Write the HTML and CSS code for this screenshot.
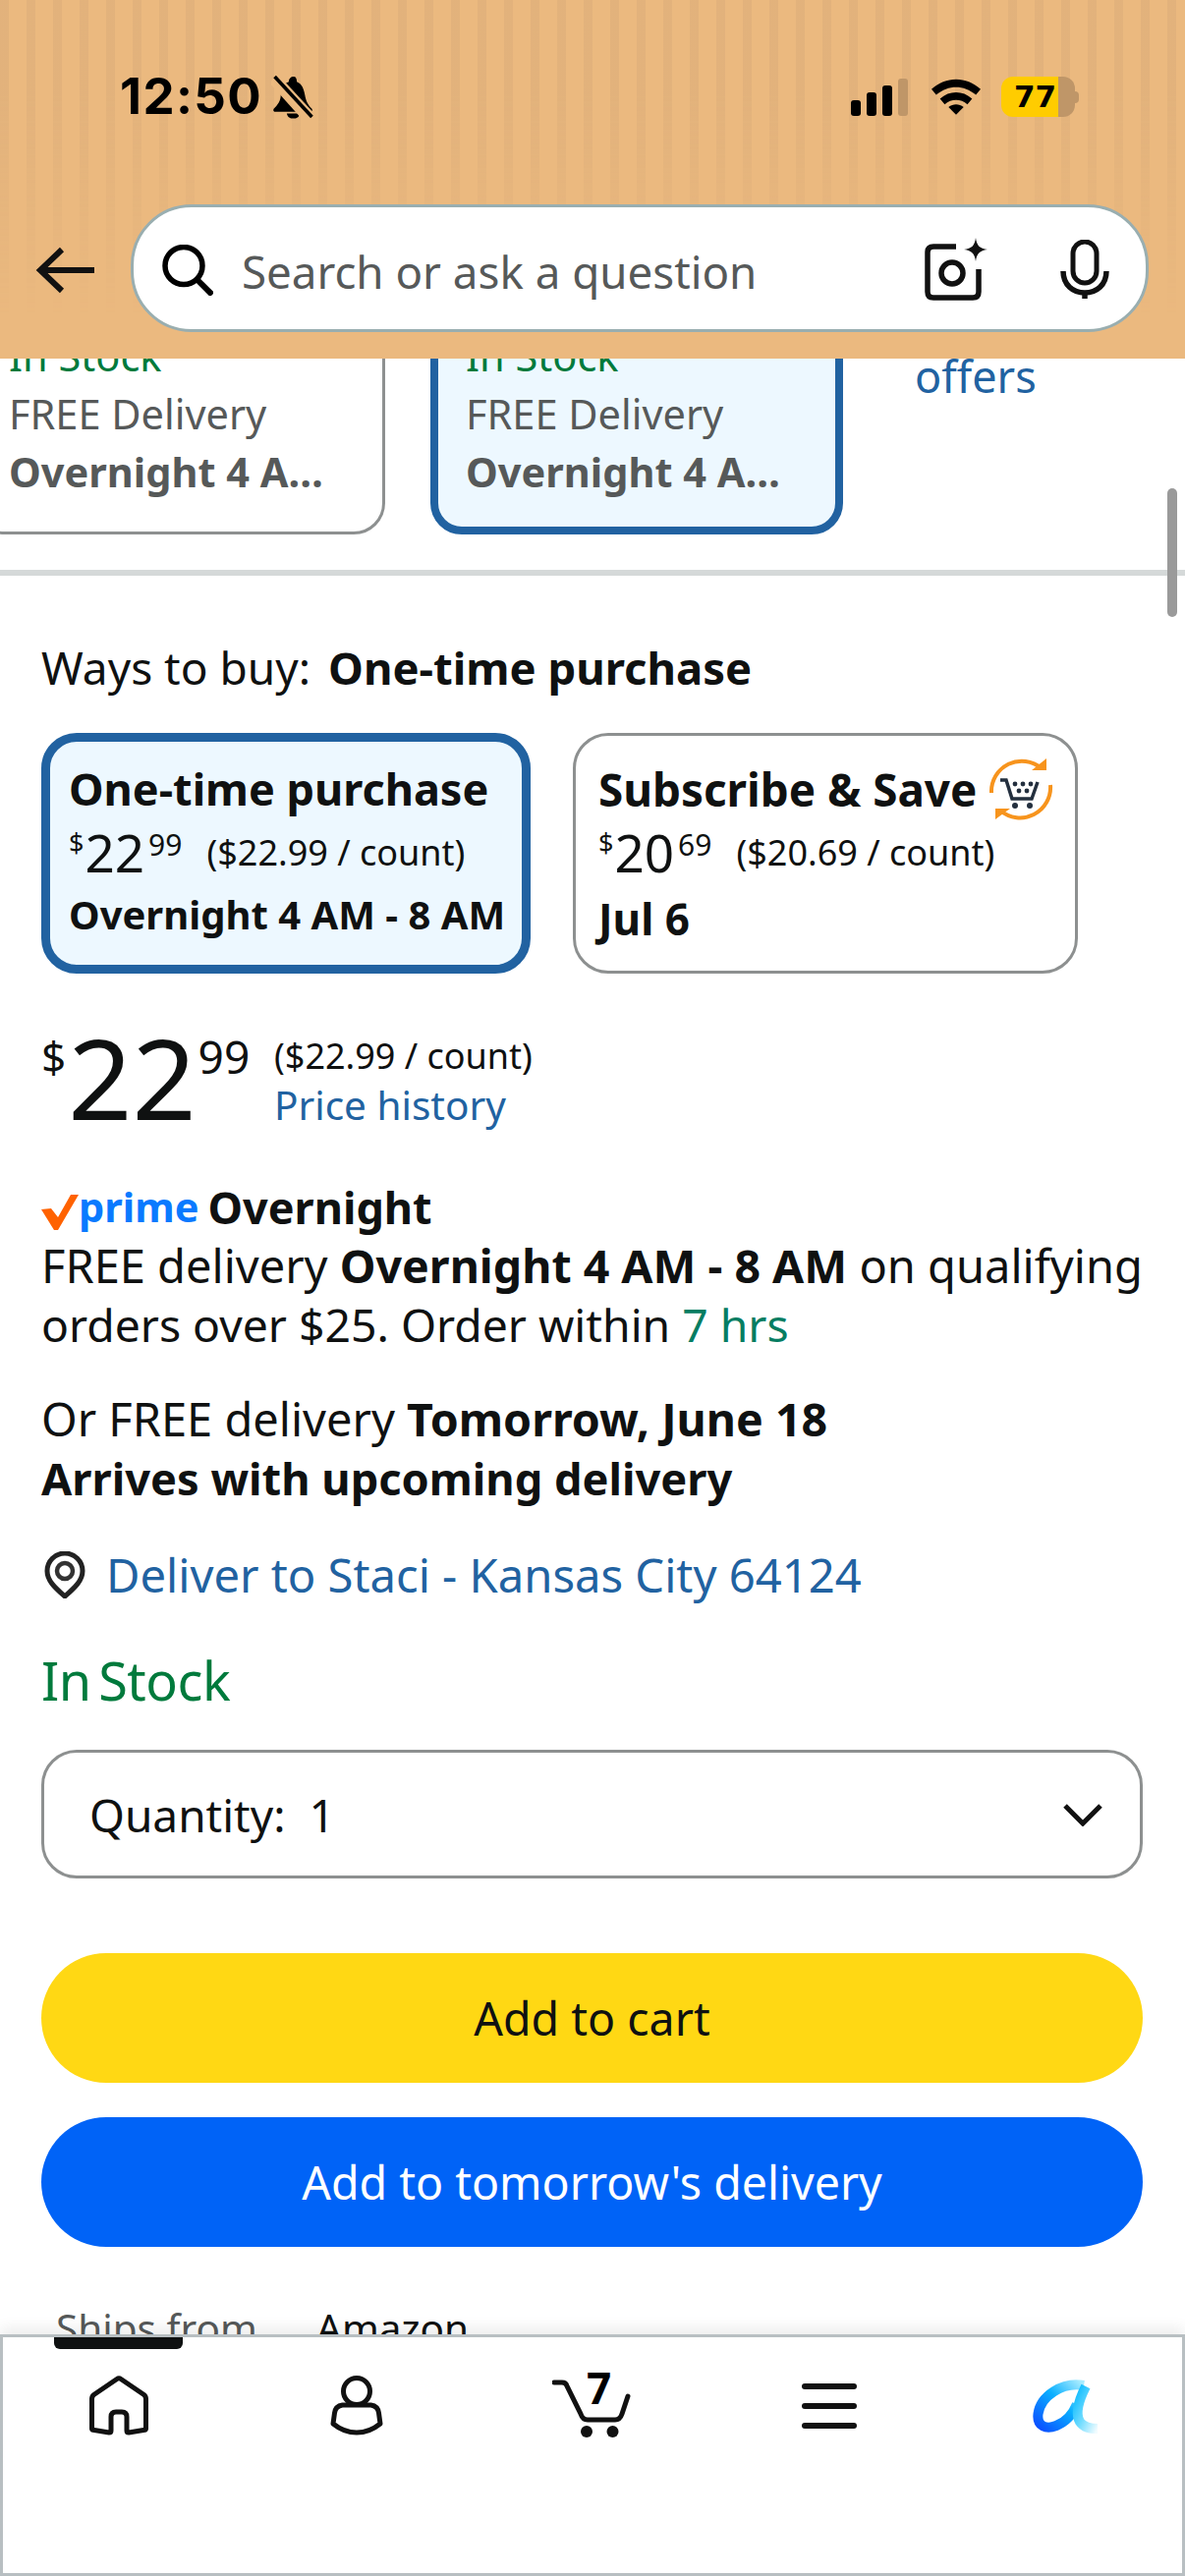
FILE: index.html
```html
<!DOCTYPE html>
<html lang="en">
<head>
<meta charset="utf-8">
<title>Amazon product</title>
<link rel="stylesheet" href="styles.css">
</head>
<body>
<div class="app">
  <header class="header">
    <div class="status">
      <div class="status-left">
        <span class="time">12:50</span>
        <svg class="bell" viewBox="0 0 42 44"><path d="M22 2c-3 0-5 2-5 5-6 2-8 7-8 13 0 6-3 10-7 14-1 2 0 3 2 3h34c2 0 3-1 2-3-4-4-6-8-7-14-1-6-3-11-8-13 0-3-1-5-3-5z" fill="#000"/><path d="M15 38.500h13c-1 4-3 5-6.500 5s-5.500-1-6.500-5z" fill="#000"/><path d="M0 6l34 38" stroke="#ebb97f" stroke-width="6"/><path d="M3 2l37 40" stroke="#ebb97f" stroke-width="8"/><path d="M3 2l37 40" stroke="#000" stroke-width="3.500"/></svg>
      </div>
      <div class="status-right">
        <svg class="signal" viewBox="0 0 58 38"><rect x="0" y="22" width="10" height="16" rx="3" fill="#000"/><rect x="16" y="14" width="10" height="24" rx="3" fill="#000"/><rect x="32" y="7" width="10" height="31" rx="3" fill="#000"/><rect x="48" y="0" width="10" height="38" rx="3" fill="#bf9668"/></svg>
        <svg class="wifi" viewBox="0 0 52 38"><path d="M0 11C15-3 37-3 52 11l-5 6C34 6 18 6 5 17z" fill="#000"/><path d="M9 21c10-9 24-9 34 0l-5 6c-7-6-17-6-24 0z" fill="#000"/><path d="M18 30c5-4 11-4 16 0l-8 8z" fill="#000"/></svg>
        <div class="battery"><div class="battery-body"><span class="battery-level">77</span></div><span class="battery-tip"></span></div>
      </div>
    </div>
    <div class="search-row">
      <svg class="back" viewBox="0 0 60 48"><path d="M27 3L5 24l22 21M5 24h55" fill="none" stroke="#111" stroke-width="6"/></svg>
      <div class="search">
        <svg class="lens" viewBox="0 0 52 52"><circle cx="22" cy="21.500" r="19" fill="none" stroke="#000" stroke-width="5.500"/><path d="M35 35l16 16" stroke="#000" stroke-width="6"/></svg>
        <span class="search-text">Search or ask a question</span>
        <svg class="cam" viewBox="0 0 66 66"><path d="M33 10H10q-6 0-6 6v40q0 6 6 6h40q6 0 6-6V33" fill="none" stroke="#111" stroke-width="5.500"/><circle cx="29" cy="37" r="11" fill="none" stroke="#111" stroke-width="5.500"/><path d="M53 1c1 8 4 11 12 12-8 1-11 4-12 12-1-8-4-11-12-12 8-1 11-4 12-12z" fill="#111"/></svg>
        <svg class="mic" viewBox="0 0 50 60"><rect x="13" y="2" width="24" height="42" rx="12" fill="none" stroke="#111" stroke-width="5"/><path d="M3 32c0 14 10 22 22 22s22-8 22-22M25 54v6" fill="none" stroke="#111" stroke-width="5.500"/></svg>
      </div>
    </div>
  </header>

  <main class="content">
    <div class="scrollbar"></div>
    <div class="carousel">
      <div class="deal-card">
        <div class="deal-stock">In Stock</div>
        <div class="deal-line">FREE Delivery</div>
        <div class="deal-line deal-strong">Overnight 4 A…</div>
      </div>
      <div class="deal-card deal-selected">
        <div class="deal-stock">In Stock</div>
        <div class="deal-line">FREE Delivery</div>
        <div class="deal-line deal-strong">Overnight 4 A…</div>
      </div>
      <div class="deal-more">offers</div>
    </div>
    <div class="divider"></div>

    <section class="buy">
      <div class="ways">Ways to buy: <b class="ways-strong">One-time purchase</b></div>
      <div class="options">
        <div class="option option-selected">
          <div class="option-title">One-time purchase</div>
          <div class="option-price"><span class="mini">$</span><span class="opt-main">22</span><span class="mini-cents">99</span><span class="unit">($22.99 / count)</span></div>
          <div class="option-note">Overnight 4 AM - 8 AM</div>
        </div>
        <div class="option option-sub">
          <div class="option-title">Subscribe &amp; Save
            <svg class="sns" viewBox="0 0 68 68"><path d="M55 13A31 31 0 0 0 4 38M13 56a31 31 0 0 0 51-26" fill="none" stroke="#f7941d" stroke-width="4"/><path d="M45 15h15V3zM23 54H8v11z" fill="#f7941d"/><path d="M13 25h6l6 19h20l6-17" fill="none" stroke="#232f3e" stroke-width="3.500"/><circle cx="28" cy="51" r="3" fill="#232f3e"/><circle cx="43" cy="51" r="3" fill="#232f3e"/><circle cx="28" cy="29" r="2.400" fill="#232f3e"/><circle cx="36" cy="29" r="2.400" fill="#232f3e"/><circle cx="44" cy="29" r="2.400" fill="#232f3e"/><circle cx="32" cy="36" r="2.400" fill="#232f3e"/><circle cx="40" cy="36" r="2.400" fill="#232f3e"/></svg>
          </div>
          <div class="option-price"><span class="mini">$</span><span class="opt-main">20</span><span class="mini-cents">69</span><span class="unit">($20.69 / count)</span></div>
          <div class="option-note">Jul 6</div>
        </div>
      </div>

      <div class="price-row">
        <div class="price"><span class="price-sup">$</span><span class="price-main">22</span><span class="price-sup price-cents">99</span></div>
        <div class="price-side">
          <div class="price-unit">($22.99 / count)</div>
          <div class="link">Price history</div>
        </div>
      </div>

      <div class="prime-row">
        <svg class="check" viewBox="0 0 38 36"><path d="M0 15l10-1 7 9L30 0h8L17 36h-4z" fill="#ff6200"/></svg>
        <span class="prime">prime</span>
        <b class="prime-word">Overnight</b>
      </div>
      <p class="text">FREE delivery <b class="text-strong">Overnight 4 AM - 8 AM</b> on qualifying<br><span class="orders">orders over $25. Order within <span class="green">7 hrs</span></span></p>
      <p class="text text-alt">Or FREE delivery <b class="text-strong">Tomorrow, June 18</b><br><b class="arrives">Arrives with upcoming delivery</b></p>
      <div class="deliver">
        <svg class="pin" viewBox="0 0 42 48"><path d="M21 46C11 37 3 30 3 20a18 18 0 0 1 36 0c0 10-8 17-18 26z" fill="#fff" stroke="#222" stroke-width="5"/><circle cx="21" cy="20" r="8" fill="none" stroke="#333" stroke-width="4.500"/></svg>
        <span class="link">Deliver to Staci - Kansas City 64124</span>
      </div>
      <div class="stock">In Stock</div>
      <div class="qty">
        <span>Quantity:&nbsp; 1</span>
        <svg class="chev" viewBox="0 0 40 24"><path d="M2 3l18 18L38 3" fill="none" stroke="#111" stroke-width="5"/></svg>
      </div>
      <div class="btn btn-cart">Add to cart</div>
      <div class="btn btn-tomorrow">Add to tomorrow's delivery</div>
      <div class="ships"><span class="ships-label">Ships from</span><span>Amazon</span></div>
    </section>
  </main>

  <nav class="tabs">
    <div class="tab tab-active">
      <svg class="ti ti-home" viewBox="0 0 62 62"><path d="M3.500 24q0-3 2-4.500L29 3.500q2-1.500 4 0l23.500 16q2 1.500 2 4.500v30q0 1-1 1.300L41 58q-2 0-2-2V42q0-5-5-5h-6q-5 0-5 5v14q0 2-2 2L4.500 55.300q-1-.3-1-1.300z" fill="none" stroke="#111" stroke-width="5" stroke-linejoin="round"/></svg>
    </div>
    <div class="tab">
      <svg class="ti ti-user" viewBox="0 0 54 62"><circle cx="27" cy="16" r="13.500" fill="none" stroke="#111" stroke-width="5"/><path d="M3 49l1.500-11q1-7 8-8h29q7 1 8 8L51 49q-11 9-24 9T3 49z" fill="none" stroke="#111" stroke-width="5" stroke-linejoin="round"/></svg>
    </div>
    <div class="tab">
      <div class="cart">
        <svg class="ti ti-cart" viewBox="0 0 80 66"><path d="M2 9h8q4 0 5 3.500L29 41q2 6 7 6h28q5 0 7-6l6-18" fill="none" stroke="#111" stroke-width="5" stroke-linecap="round"/><circle cx="35" cy="59" r="6" fill="#111"/><circle cx="61.500" cy="59" r="6" fill="#111"/></svg>
        <span class="cart-count">7</span>
      </div>
    </div>
    <div class="tab">
      <svg class="ti ti-menu" viewBox="0 0 56 46"><rect y="0" width="56" height="6" rx="3" fill="#111"/><rect y="20" width="56" height="6" rx="3" fill="#111"/><rect y="40" width="56" height="6" rx="3" fill="#111"/></svg>
    </div>
    <div class="tab">
      <svg class="ti ti-alexa" viewBox="0 0 66 56"><defs><linearGradient id="ag" x1="0" y1="1" x2="1" y2="0"><stop offset="0" stop-color="#0a50ff"/><stop offset=".55" stop-color="#0ab0ff"/><stop offset="1" stop-color="#a8ecff"/></linearGradient><linearGradient id="ag2" x1="0" y1="0" x2="1" y2="1"><stop offset="0" stop-color="#0abaff"/><stop offset=".5" stop-color="#70dcff"/><stop offset="1" stop-color="#f2fcff"/></linearGradient></defs><path d="M52 7C30 3 8 18 5.500 36 4 49 14 52 24 48c10-4 17-12 21-22" fill="none" stroke="url(#ag)" stroke-width="10"/><path d="M54 8C47 22 43 36 48 44c4 6 10 7 18 7" fill="none" stroke="url(#ag2)" stroke-width="10"/></svg>
    </div>
  </nav>
</div>
</body>
</html>
```

FILE: styles.css
```css
* { box-sizing: border-box; }
html, body { margin: 0; padding: 0; }
body { background: #fff; font-family: "Noto Sans", sans-serif; color: #0f1111; }
.app { width: 1206px; height: 2622px; display: flex; flex-direction: column; overflow: hidden; }
p { margin: 0; }
b { font-weight: 700; }

/* header */
.header { position: relative; height: 365px; flex: none; background: #ebb97f; display: flex; flex-direction: column; z-index: 2; }
.header::before { content: ""; position: absolute; left: 0; right: 0; top: 0; height: 320px; background: repeating-linear-gradient(90deg, rgba(190,150,110,.18) 0 9px, rgba(190,150,110,0) 9px 27px); -webkit-mask-image: linear-gradient(#000 30%, transparent); mask-image: linear-gradient(#000 30%, transparent); }
.status { position: relative; height: 208px; display: flex; justify-content: space-between; padding: 69px 0 0 122px; }
.status-left { display: flex; align-items: flex-start; gap: 9px; }
.time { font-family: Inter, sans-serif; font-weight: 700; font-size: 51px; line-height: 58px; color: #000; letter-spacing: 1.4px; }
.bell { width: 44px; height: 45px; margin-top: 7px; }
.status-right { display: flex; align-items: flex-start; padding-right: 108px; }
.signal { width: 58px; height: 38px; margin: 11px 0 0; }
.wifi { width: 50px; height: 37px; margin: 11px 0 0 24px; }
.battery { display: flex; align-items: center; margin: 9px 0 0 21px; }
.battery-body { width: 75px; height: 41px; border-radius: 12px; background: linear-gradient(90deg, #ffcc00 0 77%, #bf9668 77%); display: flex; align-items: center; justify-content: center; }
.battery-level { font-family: "DejaVu Sans", sans-serif; font-weight: 700; font-size: 31px; line-height: 41px; color: #000; margin-right: 6px; }
.battery-tip { width: 4px; height: 12px; background: #bf9668; border-radius: 0 4px 4px 0; }
.search-row { position: relative; display: flex; align-items: center; padding-left: 36px; }
.back { width: 60px; height: 48px; flex: none; margin: 4px 37px 0 0; }
.search { width: 1036px; height: 130px; background: #fff; border: 3px solid #99aeb0; border-radius: 62px; display: flex; align-items: center; padding: 0 37px 0 29px; }
.lens { width: 52px; height: 52px; flex: none; margin-top: 3px; }
.search-text { font-size: 45.700px; color: #565959; margin-left: 29px; flex: 1; padding-top: 6px; white-space: nowrap; }
.cam { width: 66px; height: 66px; flex: none; margin: 2px 73px 0 0; }
.mic { width: 50px; height: 60px; flex: none; margin-top: 2px; }

/* content */
.content { position: relative; flex: 1; min-height: 0; overflow: hidden; }
.scrollbar { position: absolute; right: 8px; top: 132px; width: 10px; height: 131px; background: #9a9a9a; border-radius: 5px; }
.carousel { display: flex; gap: 46px; margin: -100px 0 0 -28px; align-items: flex-start; }
.deal-card { width: 420px; height: 279px; flex: none; border: 3px solid #8d9090; border-radius: 32px; padding: 65px 0 0 34px; font-size: 41.500px; line-height: 59px; color: #565959; white-space: nowrap; }
.deal-selected { border: 8px solid #2162a1; background: #edf8ff; padding: 60px 0 0 28px; }
.deal-stock { color: #007a3c; }
.deal-strong { font-weight: 700; }
.deal-more { padding-top: 88px; margin-left: 27px; font-size: 45px; line-height: 60px; color: #2162a1; }
.divider { height: 6px; background: #d5d9d9; margin-top: 36px; }
.buy { padding: 0 43px 0 42px; }
.ways { font-size: 46px; line-height: 60px; margin-top: 63px; white-space: nowrap; }
.ways-strong { font-size: 45.400px; margin-left: 6px; }
.options { display: flex; gap: 43px; margin-top: 37px; }
.option { height: 245px; border-radius: 36px; border: 3px solid #8d9090; padding: 24px 0 0 23px; white-space: nowrap; }
.option-selected { width: 498px; border: 9px solid #2162a1; background: #edf8ff; padding: 18px 0 0 19px; }
.option-sub { width: 514px; }
.option-title { font-size: 45px; line-height: 60px; height: 60px; font-weight: 700; display: flex; align-items: center; gap: 11px; }
.option-sub .option-title { font-size: 45.800px; }
.sns { width: 68px; height: 68px; flex: none; }
.option-price { height: 65px; margin-top: 2px; display: flex; align-items: flex-start; }
.mini { font-size: 27px; line-height: 30px; margin-top: 8px; }
.mini-cents { font-size: 30px; line-height: 30px; margin: 10px 0 0 4px; }
.opt-main { font-size: 53px; line-height: 66px; margin-left: 1px; }
.unit { font-size: 36px; line-height: 66px; margin-left: 25px; }
.option-note { font-size: 40px; line-height: 62px; font-weight: 700; }
.option-sub .option-note { font-size: 44px; line-height: 70px; }

.price-row { display: flex; margin-top: 59px; }
.price { display: flex; align-items: flex-start; height: 100px; width: 237px; flex: none; }
.price-sup { font-size: 44px; line-height: 50px; }
.price-main { font-size: 114px; line-height: 92px; margin: 0 2px; }
.price-cents { font-size: 46px; }
.price-unit { font-size: 36px; line-height: 50px; }
.link { color: #2162a1; font-size: 47.200px; line-height: 50px; }
.price-side .link { font-size: 40.500px; }

.prime-row { display: flex; align-items: center; height: 60px; margin-top: 48px; font-size: 45px; }
.check { width: 38px; height: 36px; flex: none; margin-top: 12px; }
.prime { color: #0a7aff; font-weight: 700; font-size: 41.500px; }
.prime-word { margin-left: 9px; }
.text { font-size: 47px; line-height: 60px; white-space: nowrap; }
.text-strong { font-size: 46.500px; }
.orders { font-size: 46.300px; }
.text-alt { margin-top: 35px; }
.arrives { font-size: 45.200px; }
.green { color: #067d62; }
.deliver { display: flex; align-items: center; height: 60px; margin-top: 38px; }
.pin { width: 42px; height: 48px; flex: none; margin: 0 21px 0 3px; }
.deliver .link { line-height: 60px; }
.stock { font-size: 54px; line-height: 60px; color: #007a3c; margin-top: 47px; letter-spacing: -.5px; word-spacing: -6px; }
.qty { height: 131px; margin-top: 41px; border: 3px solid #8d9090; border-radius: 36px; display: flex; align-items: center; justify-content: space-between; padding: 0 38px 0 46px; font-size: 46px; }
.chev { width: 40px; height: 24px; }
.btn { height: 132px; border-radius: 66px; display: flex; align-items: center; justify-content: center; font-size: 46.500px; }
.btn-cart { background: #ffd814; margin-top: 76px; }
.btn-tomorrow { background: #0063f7; color: #fff; margin-top: 35px; }
.ships { display: flex; font-size: 40.500px; line-height: 60px; margin-top: 53px; padding-left: 15px; white-space: nowrap; }
.ships-label { color: #565959; width: 265px; }

/* tabs */
.tabs { height: 246px; flex: none; border: 3px solid #b8bfc2; display: flex; align-items: flex-start; background: #fff; box-shadow: 0 -6px 14px rgba(0,0,0,.08); position: relative; }
.tab { flex: 1; display: flex; justify-content: center; align-items: center; height: 140px; position: relative; }
.tab-active::before { content: ""; position: absolute; top: 0; left: 52px; width: 131px; height: 12px; background: #0f1111; border-radius: 0 0 6px 6px; }
.ti { display: block; }
.ti-home { width: 62px; height: 62px; margin-right: 5px; }
.ti-user { width: 54px; height: 62px; }
.cart { position: relative; width: 80px; height: 66px; margin-right: 2px; }
.ti-cart { width: 80px; height: 66px; }
.cart-count { position: absolute; left: 35px; top: -15px; font-size: 44px; font-weight: 700; line-height: 58px; color: #000; }
.ti-menu { width: 56px; height: 46px; margin-left: 2px; }
.ti-alexa { width: 66px; height: 56px; margin-left: 2px; }
```
